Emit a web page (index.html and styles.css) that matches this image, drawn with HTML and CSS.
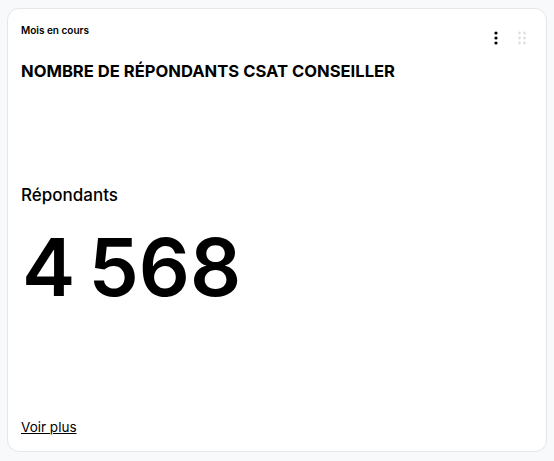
FILE: index.html
```html
<!DOCTYPE html>
<html lang="fr">
<head>
<meta charset="utf-8">
<link rel="stylesheet" href="styles.css">
</head>
<body>
<div class="card">
  <div class="head">
    <div class="head-text">
      <div class="period">Mois en cours</div>
      <h2 class="title">NOMBRE DE RÉPONDANTS CSAT CONSEILLER</h2>
    </div>
    <div class="actions">
      <svg class="kebab" width="4" height="14" viewBox="0 0 4 14"><circle cx="2" cy="2" r="1.6"/><circle cx="2" cy="7" r="1.6"/><circle cx="2" cy="12" r="1.6"/></svg>
      <svg class="grip" width="8" height="14" viewBox="0 0 8 14"><circle cx="1.5" cy="2" r="1.4"/><circle cx="6.5" cy="2" r="1.4"/><circle cx="1.5" cy="7" r="1.4"/><circle cx="6.5" cy="7" r="1.4"/><circle cx="1.5" cy="12" r="1.4"/><circle cx="6.5" cy="12" r="1.4"/></svg>
    </div>
  </div>
  <div class="body">
    <div class="label">Répondants</div>
    <div class="value">4&#8239;568</div>
  </div>
  <a class="more" href="#">Voir plus</a>
</div>
</body>
</html>
```
FILE: styles.css
```css
html, body { margin: 0; padding: 0; }
body {
  background: #f8f9fa;
  font-family: Inter, "Noto Sans", sans-serif;
  color: #000;
  padding: 8px 7px 9px 7px;
  box-sizing: border-box;
  height: 461px;
}
.card {
  box-sizing: border-box;
  height: 444px;
  background: #fff;
  border: 1px solid #e4e6ea;
  border-radius: 12px;
  padding: 14px 13px 15px 13px;
  display: flex;
  flex-direction: column;
}
.head { display: flex; justify-content: space-between; align-items: flex-start; }
.period { font-size: 10px; font-weight: 600; line-height: 14px; }
.title { margin: 24px 0 0 0; font-size: 16.6px; font-weight: 700; line-height: 20px; letter-spacing: 0; }
.actions { display: flex; gap: 20px; margin-top: 8px; margin-right: 7px; }
.kebab { fill: #000; }
.grip { fill: #e0e0e0; }
.body { flex: 1; display: flex; flex-direction: column; margin-top: 103px; }
.label { font-size: 17px; font-weight: 500; line-height: 22px; }
.value { font-size: 80px; font-weight: 600; line-height: 96px; margin-top: 13px; margin-left: 1px; letter-spacing: -1px; }
.more { color: #000; font-size: 13.5px; line-height: 18px; text-decoration: underline; align-self: flex-start; }
```
